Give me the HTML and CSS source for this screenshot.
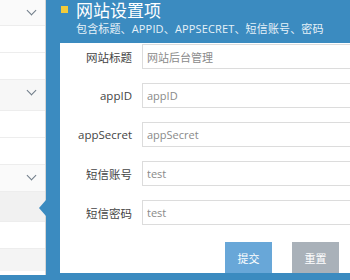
FILE: index.html
```html
<!DOCTYPE html>
<html lang="zh-CN">

<head>
  <meta charset="UTF-8" />
  <meta name="viewport" content="width=device-width, initial-scale=1.0" />
  <title>网站设置项</title>
  <link rel="stylesheet" href="styles.css">
</head>

<body>
  <div class="layout">
    <ul class="side-menu">
      <li class="has-sub"><span class="chev"></span></li>
      <li></li>
      <li></li>
      <li class="has-sub shade"><span class="chev"></span></li>
      <li></li>
      <li></li>
      <li class="has-sub"><span class="chev"></span></li>
      <li class="active"></li>
      <li></li>
      <li class="shade last"></li>
    </ul>
    <div class="main">
      <div class="head">
        <h2><i class="mark"></i>网站设置项</h2>
        <p>包含标题、APPID、APPSECRET、短信账号、密码</p>
      </div>
      <form class="panel">
        <div class="row">
          <label>网站标题</label>
          <input type="text" value="网站后台管理" />
        </div>
        <div class="row">
          <label>appID</label>
          <input type="text" value="appID" />
        </div>
        <div class="row">
          <label>appSecret</label>
          <input type="text" value="appSecret" />
        </div>
        <div class="row">
          <label>短信账号</label>
          <input type="text" value="test" />
        </div>
        <div class="row">
          <label>短信密码</label>
          <input type="text" value="test" />
        </div>
        <div class="actions">
          <button type="button" class="btn submit">提交</button>
          <button type="reset" class="btn reset">重置</button>
        </div>
      </form>
    </div>
  </div>
</body>

</html>
```

FILE: styles.css
```css
* {
  box-sizing: border-box;
}

html,
body {
  margin: 0;
  height: 100%;
  overflow: hidden;
  background: #3b8bc0;
  font-family: "Open Sans", "Noto Sans CJK SC", sans-serif;
}

.layout {
  display: flex;
  height: 280px;
}

.side-menu {
  margin: 0;
  padding: 0;
  list-style: none;
  width: 46px;
  height: 275px;
  flex-shrink: 0;
  background: #fff;
  border-right: 1px solid #d6d6d6;
}

.side-menu li {
  height: 27px;
  border-bottom: 1px solid #ededed;
  position: relative;
}

.side-menu li:first-child {
  height: 26px;
}

.side-menu li.has-sub {
  background: #fafafa;
}

.side-menu li.shade {
  height: 31px;
  background: #f7f7f7;
}

.side-menu li.active {
  height: 30px;
  background: #f1f1f1;
}

.side-menu li.active::after {
  content: "";
  position: absolute;
  right: -1px;
  top: 8px;
  border-top: 8px solid transparent;
  border-bottom: 8px solid transparent;
  border-right: 7px solid #3b8bc0;
}

.side-menu li.last {
  height: 22px;
  background: #f4f4f4;
  border-bottom: none;
}

.chev {
  position: absolute;
  right: 10px;
  top: 7px;
  width: 7px;
  height: 7px;
  border-right: 1.2px solid #6f7c88;
  border-bottom: 1.2px solid #6f7c88;
  transform: rotate(45deg);
}

.main {
  flex: 1;
  min-width: 0;
  padding: 0 0 7px 14px;
  display: flex;
  flex-direction: column;
}

.head {
  height: 43px;
  color: #fff;
}

.head h2 {
  margin: 0;
  font-size: 17px;
  font-weight: normal;
  line-height: 21px;
  display: flex;
  align-items: center;
}

.head .mark {
  width: 7px;
  height: 7px;
  background: #f2cb3a;
  margin: 0 8px 0 1px;
  position: relative;
  top: -1px;
}

.head p {
  margin: 0;
  padding-left: 16px;
  font-size: 11px;
  line-height: 15px;
  letter-spacing: 0.15px;
  color: #e6f1f8;
}

.panel {
  flex: 1;
  background: #fff;
  padding-top: 1px;
  overflow: hidden;
  display: flex;
  flex-direction: column;
  gap: 14px;
}

.row {
  display: flex;
  align-items: center;
  height: 25px;
}

.row label {
  width: 74px;
  flex-shrink: 0;
  text-align: right;
  padding-right: 2px;
  font-size: 11.5px;
  color: #444;
}

.row input {
  flex: 1;
  min-width: 0;
  margin-left: 8px;
  height: 25px;
  border: 1px solid #dcdcdc;
  border-right: 0;
  padding: 0 4px;
  font-family: inherit;
  font-size: 11px;
  color: #8a8a8a;
  outline: none;
}

.actions {
  margin-top: auto;
  display: flex;
  gap: 20px;
  padding-left: 165px;
}

.btn {
  width: 47px;
  height: 31px;
  border: none;
  color: #fff;
  font-family: inherit;
  font-size: 11px;
  padding: 0;
}

.btn.submit {
  background: #68a7d8;
}

.btn.reset {
  background: #a9b1b9;
}
```
